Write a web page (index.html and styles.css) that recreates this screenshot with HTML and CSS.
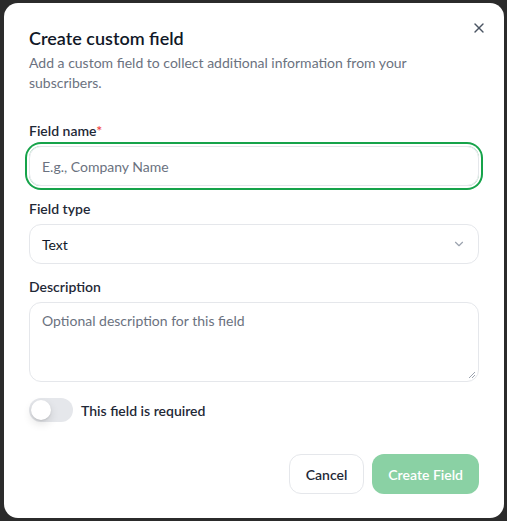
FILE: index.html
```html
<!DOCTYPE html>
<html lang="en">
<head>
<meta charset="utf-8">
<title>Create custom field</title>
<link rel="stylesheet" href="styles.css">
</head>
<body>
<div class="overlay">
  <div class="dialog" role="dialog">
    <button class="close" aria-label="Close">
      <svg width="16" height="16" viewBox="0 0 24 24" fill="none" stroke="currentColor" stroke-width="2" stroke-linecap="round" stroke-linejoin="round"><path d="M18 6 6 18"/><path d="m6 6 12 12"/></svg>
    </button>
    <div class="header">
      <h2 class="title">Create custom field</h2>
      <p class="subtitle">Add a custom field to collect additional information from your subscribers.</p>
    </div>
    <div class="form">
      <div class="field">
        <label class="label">Field name<span class="req">*</span></label>
        <div class="input focused">E.g., Company Name</div>
      </div>
      <div class="field">
        <label class="label">Field type</label>
        <div class="input select">
          <span class="value">Text</span>
          <svg class="chev" width="16" height="16" viewBox="0 0 24 24" fill="none" stroke="currentColor" stroke-width="2" stroke-linecap="round" stroke-linejoin="round"><path d="m6 9 6 6 6-6"/></svg>
        </div>
      </div>
      <div class="field">
        <label class="label">Description</label>
        <div class="input textarea">Optional description for this field
          <svg class="grip" width="8" height="8" viewBox="0 0 8 8"><path d="M7 1 1 7M7 4 4 7" stroke="#9ca3af" stroke-width="1"/></svg>
        </div>
      </div>
      <div class="toggle-row">
        <span class="switch"><span class="knob"></span></span>
        <span class="toggle-label">This field is required</span>
      </div>
    </div>
    <div class="footer">
      <button class="btn btn-outline">Cancel</button>
      <button class="btn btn-primary">Create Field</button>
    </div>
  </div>
</div>
</body>
</html>
```
FILE: styles.css
```css
* { box-sizing: border-box; }
html, body { margin: 0; padding: 0; }
body {
  background: #2b2b2b;
  font-family: "Lato", "Segoe UI", sans-serif;
  color: #111827;
  width: 507px;
  height: 521px;
  overflow: hidden;
}
.overlay {
  padding: 3px 3px 3px 4px;
}
.dialog {
  position: relative;
  width: 500px;
  height: 515px;
  background: #ffffff;
  border-radius: 14px;
  padding: 21px 25px 0 25px;
  display: flex;
  flex-direction: column;
}
.close {
  position: absolute;
  top: 17px;
  right: 17px;
  width: 16px;
  height: 16px;
  padding: 0;
  border: 0;
  background: transparent;
  color: #4b5563;
  display: flex;
}
.header { margin-bottom: 28px; }
.title {
  margin: 0;
  font-size: 18px;
  line-height: 28px;
  font-weight: 600;
  color: #111827;
}
.subtitle {
  margin: 1px 0 0 0;
  font-size: 14px;
  line-height: 20px;
  color: #6b7280;
  padding-right: 40px;
}
.form {
  display: flex;
  flex-direction: column;
  gap: 13px;
}
.field {
  display: flex;
  flex-direction: column;
  gap: 5px;
}
.label {
  font-size: 14px;
  line-height: 20px;
  font-weight: 600;
  color: #1f2937;
}
.req { color: #ef4444; }
.input {
  height: 40px;
  border: 1px solid #e5e7eb;
  border-radius: 12px;
  padding: 0 12px;
  display: flex;
  align-items: center;
  font-size: 14px;
  color: #6b7280;
}
.focused {
  box-shadow: 0 0 0 2px #ffffff, 0 0 0 4px #16a34a;
}
.select { justify-content: space-between; color: #111827; }
.chev { color: #9ca3af; width: 14px; height: 14px; margin-right: 0; }
.textarea {
  position: relative;
  height: 80px;
  align-items: flex-start;
  padding-top: 9px;
}
.grip { position: absolute; right: 2px; bottom: 2px; }
.toggle-row {
  display: flex;
  align-items: center;
  gap: 8px;
  margin-top: 3px;
}
.switch {
  width: 44px;
  height: 24px;
  border-radius: 12px;
  background: #e5e7eb;
  padding: 2px;
  display: flex;
}
.knob {
  width: 20px;
  height: 20px;
  border-radius: 50%;
  background: #ffffff;
  box-shadow: 0 4px 10px rgba(0,0,0,0.12), 0 1px 2px rgba(0,0,0,0.1);
}
.toggle-label {
  font-size: 14px;
  font-weight: 600;
  color: #1f2937;
}
.footer {
  margin-top: 32px;
  display: flex;
  justify-content: flex-end;
  gap: 8px;
}
.btn {
  height: 40px;
  border-radius: 12px;
  font-family: inherit;
  font-size: 14px;
  font-weight: 600;
  padding: 0 16px;
  cursor: pointer;
}
.btn-outline {
  background: #ffffff;
  border: 1px solid #e5e7eb;
  color: #1f2937;
}
.btn-primary {
  background: #8ad1a4;
  border: 0;
  color: #ffffff;
}
```
